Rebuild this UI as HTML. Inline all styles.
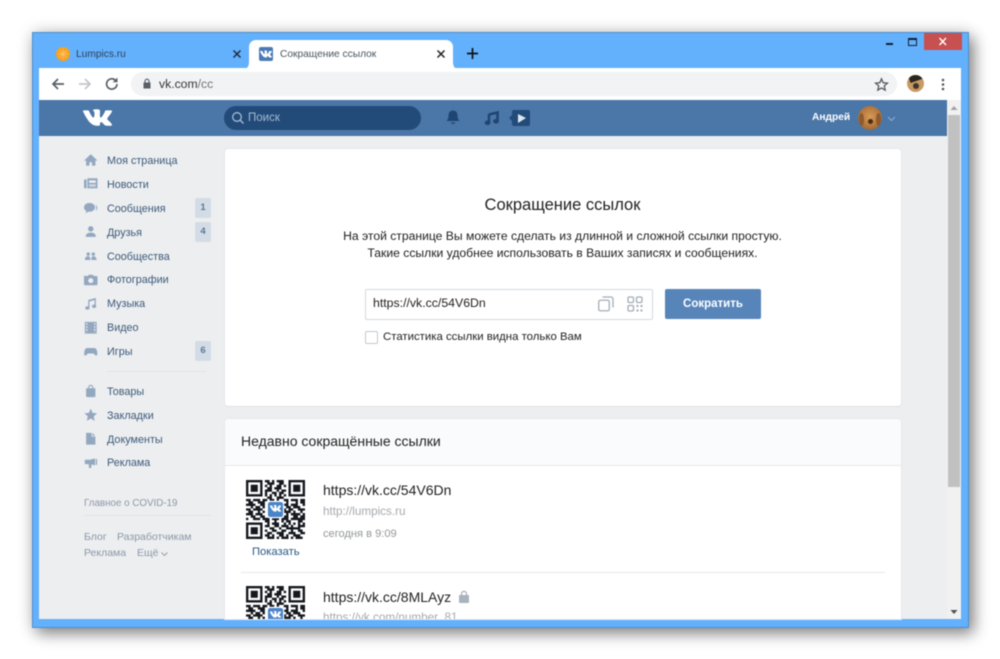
<!DOCTYPE html>
<html><head><meta charset="utf-8"><style>
html,body{margin:0;padding:0;background:#fff;width:1000px;height:659px;overflow:hidden}
body{font-family:"Liberation Sans",sans-serif;position:relative;filter:blur(.4px)}
div,span,svg{position:absolute}
.t{white-space:nowrap;line-height:16px}
.nav{left:107px;font-size:10.8px;color:#3b5a7a;white-space:nowrap;line-height:14px}
.b{left:195px;width:16px;height:20px;background:#d3dce6;border-radius:2px;color:#5b7897;font-size:9.5px;font-weight:bold;text-align:center;line-height:20px}
.ic{left:84px;width:13.500px;height:13.500px;fill:#93a8c0}
.f{font-size:10.5px;color:#8a98a8;white-space:nowrap;line-height:14px}
</style></head><body>
<svg width="0" height="0" style="position:absolute"><defs>
<path id="vk" d="M13.162 18.994c.609 0 .858-.406.851-.915-.031-1.917.714-2.949 2.059-1.604 1.488 1.488 1.796 2.519 3.603 2.519h3.2c.808 0 1.126-.26 1.126-.668 0-.863-1.421-2.386-2.625-3.504-1.686-1.565-1.765-1.602-.313-3.486 1.801-2.339 4.157-5.336 2.073-5.336h-3.981c-.772 0-.828.435-1.103 1.083-.995 2.347-2.886 5.387-3.604 4.922-.751-.485-.407-2.406-.35-5.261.015-.754.011-1.271-1.141-1.539-.629-.145-1.241-.205-1.809-.205-2.273 0-3.841.953-2.95 1.119 1.571.293 1.42 3.692 1.054 5.16-.638 2.556-3.036-2.024-4.035-4.305-.241-.548-.315-.974-1.175-.974h-3.255c-.492 0-.787.16-.787.516 0 .602 2.96 6.72 5.786 9.77 2.756 2.975 5.48 2.708 7.376 2.708z"/>
<g id="qr">
<path fill="none" stroke="#15191f" stroke-width="1" d="M8 .5h2M11 .5h1M13 .5h3M9 1.500h3M14 1.500h2M8 2.500h1M10 2.500h1M13 2.500h2M16 2.500h1M9 3.500h2M12 3.500h3M8 4.500h3M13 4.500h1M15 4.500h2M8 5.500h1M11 5.500h2M14 5.500h2M8 6.500h1M10 6.500h1M12 6.500h1M14 6.500h1M16 6.500h1M9 7.500h2M13 7.500h3M0 8.500h2M3 8.500h3M7 8.500h2M10 8.500h2M13 8.500h1M16 8.500h2M19 8.500h3M23 8.500h2M1 9.500h2M5 9.500h3M17 9.500h1M21 9.500h1M23 9.500h2M0 10.500h4M6 10.500h2M16 10.500h2M19 10.500h3M24 10.500h1M2 11.500h1M4 11.500h2M7 11.500h1M17 11.500h2M20 11.500h3M0 12.500h2M3 12.500h4M16 12.500h1M18 12.500h2M22 12.500h3M1 13.500h2M5 13.500h1M7 13.500h1M16 13.500h3M20 13.500h1M23 13.500h1M0 14.500h3M4 14.500h3M17 14.500h1M19 14.500h4M24 14.500h1M2 15.500h2M6 15.500h2M16 15.500h2M20 15.500h2M23 15.500h2M0 16.500h1M3 16.500h3M7 16.500h3M11 16.500h3M15 16.500h3M19 16.500h6M8 17.500h2M12 17.500h1M15 17.500h1M17 17.500h2M22 17.500h2M9 18.500h1M11 18.500h3M16 18.500h1M18 18.500h1M20 18.500h1M22 18.500h1M24 18.500h1M8 19.500h2M12 19.500h2M15 19.500h3M19 19.500h1M22 19.500h3M10 20.500h2M14 20.500h1M17 20.500h6M8 21.500h1M11 21.500h2M15 21.500h2M19 21.500h1M22 21.500h2M9 22.500h2M13 22.500h3M18 22.500h3M23 22.500h2M8 23.500h2M11 23.500h1M14 23.500h2M17 23.500h1M20 23.500h3M9 24.500h3M13 24.500h1M15 24.500h3M19 24.500h1M21 24.500h3"/>
<g fill="none" stroke="#15191f"><rect x=".5" y=".5" width="6" height="6"/><rect x="18.500" y=".5" width="6" height="6"/><rect x=".5" y="18.500" width="6" height="6"/></g>
<g fill="#15191f"><rect x="2" y="2" width="3" height="3"/><rect x="20" y="2" width="3" height="3"/><rect x="2" y="20" width="3" height="3"/></g>
<rect x="8.800" y="8.800" width="7.400" height="7.400" rx="1.200" fill="#fff"/><rect x="9.300" y="9.300" width="6.400" height="6.400" rx="1" fill="#4a84c8"/>
<use href="#vk" transform="translate(10.100 9.600) scale(.2)" fill="#fff"/>
</g>
</defs></svg>

<!-- window -->
<div style="left:32px;top:32px;width:935px;height:594px;background:#63b0fd;border:1px solid #4b8fd0;box-shadow:5px 6px 14px rgba(0,0,0,.42),0 0 16px rgba(0,0,0,.16)"></div>
<!-- win controls -->
<div style="left:886px;top:43px;width:7px;height:2px;background:#123"></div>
<div style="left:908px;top:38px;width:7px;height:5px;border:1px solid #123;border-top-width:2px"></div>
<div style="left:924px;top:33px;width:38px;height:17px;background:#c75050"></div>
<svg style="left:938px;top:37px" width="10" height="9"><path d="M1.500 1l6.500 7M8 1L1.500 8" stroke="#fff" stroke-width="1.400"/></svg>

<!-- tabs -->
<div style="left:56px;top:47px;width:14px;height:14px;border-radius:50%;background:#f9a11e"></div>
<svg style="left:56px;top:47px" width="14" height="14"><path d="M7 2v10M2 7h10M3.500 3.500l7 7M10.500 3.500l-7 7" stroke="#fdc66f" stroke-width=".8"/></svg>
<div class="t" style="left:76px;top:47px;font-size:10.2px;color:#2d4258">Lumpics.ru</div>
<svg style="left:232px;top:49px" width="10" height="10"><path d="M1.500 1.500l7 7M8.500 1.500l-7 7" stroke="#1f2d3d" stroke-width="1.500"/></svg>
<div style="left:249px;top:40px;width:204px;height:29px;background:#fff;border-radius:7px 7px 0 0"></div>
<svg style="left:243px;top:60px" width="216" height="9"><path d="M0 9Q6 9 6 2V9zM216 9Q210 9 210 2V9z" fill="#fff"/></svg>
<div style="left:259px;top:47px;width:14px;height:14px;background:#4a7ab5;border-radius:2px"></div>
<svg style="left:260px;top:48px" width="12" height="12" viewBox="0 0 24 24"><use href="#vk" fill="#fff"/></svg>
<div class="t" style="left:280px;top:47px;font-size:10.2px;color:#4a5560">Сокращение ссылок</div>
<svg style="left:436px;top:49px" width="10" height="10"><path d="M1.500 1.500l7 7M8.500 1.500l-7 7" stroke="#222" stroke-width="1.500"/></svg>
<svg style="left:466px;top:47px" width="13" height="13"><path d="M6.500 1v11M1 6.500h11" stroke="#111" stroke-width="1.700"/></svg>

<!-- toolbar -->
<div style="left:39px;top:68px;width:922px;height:32px;background:#fff"></div>
<svg style="left:50px;top:76px" width="16" height="16"><path d="M14 8H3M8 3L3 8l5 5" fill="none" stroke="#5a6068" stroke-width="1.700"/></svg>
<svg style="left:77px;top:76px" width="16" height="16"><path d="M2 8h11M8 3l5 5-5 5" fill="none" stroke="#c2c5c9" stroke-width="1.700"/></svg>
<svg style="left:104px;top:76px" width="16" height="16"><path d="M13 8a5.200 5.200 0 1 1-1.500-3.700" fill="none" stroke="#5a6068" stroke-width="1.700"/><path d="M13.500 1.500v4.800H8.700z" fill="#5a6068"/></svg>
<div style="left:131px;top:72px;width:766px;height:24px;background:#f1f3f4;border-radius:12px"></div>
<svg style="left:142px;top:78px" width="11" height="12"><rect x="1.500" y="4.500" width="7" height="6" fill="#5a6068"/><path d="M3 5V3.200a2 2 0 0 1 4 0V5" fill="none" stroke="#5a6068" stroke-width="1.100"/></svg>
<div class="t" style="left:159px;top:76px;font-size:12.200px;color:#33373b">vk.com<span style="position:static;color:#70757a">/cc</span></div>
<svg style="left:874px;top:77px" width="15" height="15" viewBox="0 0 24 24"><path d="M12 3l2.700 6.200 6.800.6-5.100 4.500 1.500 6.700L12 17.500 6.100 21l1.500-6.700L2.500 9.800l6.800-.6z" fill="none" stroke="#50555b" stroke-width="2"/></svg>
<div style="left:907px;top:75px;width:17px;height:17px;border-radius:50%;background:#c89a63;overflow:hidden"><div style="left:2px;top:-1px;width:13px;height:7px;background:#2c2620;transform:rotate(-20deg)"></div><div style="left:6px;top:8px;width:6px;height:6px;background:#41352c;border-radius:50%"></div></div>
<svg style="left:941px;top:78px" width="4" height="13"><circle cx="2" cy="2" r="1.300" fill="#555"/><circle cx="2" cy="6.500" r="1.300" fill="#555"/><circle cx="2" cy="11" r="1.300" fill="#555"/></svg>

<!-- page bg -->
<div style="left:39px;top:100px;width:908px;height:519px;background:#edeef0"></div>
<!-- scrollbar -->
<div style="left:947px;top:100px;width:14px;height:519px;background:#f1f1f1"></div>
<div style="left:948px;top:115px;width:12px;height:372px;background:#c1c1c1"></div>
<svg style="left:950px;top:105px" width="8" height="6"><path d="M4 1l3.500 4H.5z" fill="#a3a3a3"/></svg>
<svg style="left:950px;top:609px" width="8" height="6"><path d="M4 5L7.500 1H.5z" fill="#505050"/></svg>

<!-- VK header -->
<div style="left:39px;top:100px;width:908px;height:36px;background:#4a76a8"></div>
<svg style="left:83px;top:109px" width="29" height="17" viewBox="0 4.800 24 14.400" preserveAspectRatio="none"><use href="#vk" fill="#fff"/></svg>
<div style="left:224px;top:106px;width:197px;height:24px;background:#224b7a;border-radius:12px"></div>
<svg style="left:231px;top:111px" width="14" height="14"><circle cx="6" cy="6" r="4.300" fill="none" stroke="#a5bad2" stroke-width="1.300"/><path d="M9 9l3.500 3.500" stroke="#a5bad2" stroke-width="1.300"/></svg>
<div class="t" style="left:248px;top:110px;font-size:11.500px;color:#a5bad2">Поиск</div>
<svg style="left:445px;top:109px" width="16" height="17"><path d="M8 1.500c-3 0-4.500 2.300-4.500 5 0 3-1 4.300-2 5.500h13c-1-1.200-2-2.500-2-5.500 0-2.700-1.500-5-4.500-5z" fill="#1f4673"/><path d="M5.500 13.500h5q-1 1.500-2.500 1.500t-2.500-1.500z" fill="#1f4673"/></svg>
<svg style="left:484px;top:110px" width="15" height="16"><path d="M5 4.500L13.500 2.500v8.500" fill="none" stroke="#1f4673" stroke-width="2.600"/><path d="M5 4v8.500" stroke="#1f4673" stroke-width="2.400"/><ellipse cx="3.600" cy="12.800" rx="2.900" ry="2.300" fill="#1f4673"/><ellipse cx="12" cy="11.300" rx="2.900" ry="2.300" fill="#1f4673"/></svg>
<svg style="left:509px;top:110px" width="21" height="16"><path d="M5 0h14a2 2 0 0 1 2 2v12a2 2 0 0 1-2 2H5a2 2 0 0 1-2-2v-3L0 8l3-3V2a2 2 0 0 1 2-2z" fill="#224b7a"/><path d="M9 4l8 4-8 5z" fill="#dce6f0"/></svg>
<div class="t" style="left:812px;top:110px;font-size:10.200px;font-weight:bold;color:#fff">Андрей</div>
<div style="left:858px;top:106px;width:24px;height:24px;border-radius:50%;background:radial-gradient(circle at 50% 45%,#d69a58 0,#b5763b 55%,#6b5a3e 100%);overflow:hidden"><div style="left:10px;top:13px;width:5px;height:5px;background:#4c2d16;border-radius:50%"></div><div style="left:1px;top:7px;width:5px;height:13px;background:#8f5a2c;border-radius:50%"></div><div style="left:18px;top:7px;width:5px;height:13px;background:#8f5a2c;border-radius:50%"></div></div>
<svg style="left:887px;top:116px" width="9" height="6"><path d="M1 1l3.500 3.500L8 1" fill="none" stroke="#8fadd0" stroke-width="1.100"/></svg>

<!-- sidebar -->
<svg class="ic" style="top:153px" viewBox="0 0 16 16"><path d="M8 1.500L0 9h2.500v6h4v-4h3v4h4V9H16z"/></svg>
<svg class="ic" style="top:177px" viewBox="0 0 16 16"><path fill-rule="evenodd" d="M0 3h3v10.500H1.500A1.500 1.500 0 0 1 0 12zM4 1.500h12v12H4zM6 4v3h8V4zM6 9v1.500h8V9zM6 11.500V12h8v-.5z"/></svg>
<svg class="ic" style="top:201px" viewBox="0 0 16 16"><ellipse cx="6.500" cy="7.500" rx="6.500" ry="5.300"/><path d="M3 11l-1 3.500 4-2.500zM14 4.500c2.500 2.500 2 5.500 0 7.500 .5-2.500 .5-5 0-7.500z"/></svg>
<svg class="ic" style="top:225px" viewBox="0 0 16 16"><circle cx="8" cy="4.500" r="3.200"/><path d="M2 14c0-3 2-5 6-5s6 2 6 5z"/></svg>
<svg class="ic" style="top:249px" viewBox="0 0 16 16"><circle cx="5" cy="6" r="2"/><circle cx="11" cy="6" r="2"/><path d="M1 13c0-2.500 1.500-4.500 3.800-4.500S7.500 10.500 7.500 13zM8.500 13c0-2.500 1-4.500 2.700-4.500S15 10.500 15 13z"/></svg>
<svg class="ic" style="top:273px" viewBox="0 0 16 16"><path fill-rule="evenodd" d="M1.500 3.500h3l1-1.500h5l1 1.500h3A1.500 1.500 0 0 1 16 5v8a1.500 1.500 0 0 1-1.500 1.500h-13A1.500 1.500 0 0 1 0 13V5a1.500 1.500 0 0 1 1.500-2zM8 6a3 3 0 1 0 0 6 3 3 0 0 0 0-6z"/></svg>
<svg class="ic" style="top:297px" viewBox="0 0 16 16"><path d="M5 3.500L14 1v2.300L6.500 5.300V13H5zM12.500 3.300H14V11h-1.500z"/><ellipse cx="4" cy="13" rx="2.500" ry="2"/><ellipse cx="12" cy="11" rx="2.500" ry="2"/></svg>
<svg class="ic" style="top:321px" viewBox="0 0 16 16"><path fill-rule="evenodd" d="M1 1h14v14H1zM2.500 2.500v2h1.500v-2zM2.500 6v2h1.500V6zM2.500 9.500v2h1.500v-2zM2.500 13v.5h1.500V13zM12 2.500v2h1.500v-2zM12 6v2h1.500V6zM12 9.500v2h1.500v-2zM12 13v.5h1.500V13z"/></svg>
<svg class="ic" style="top:345px" viewBox="0 0 16 16"><path d="M4 3.500h8c2 0 3 1.500 3.500 4 .5 3 .5 5-1 5-1.500 0-2.500-2.500-3.500-2.500H5C4 10 3 12.500 1.500 12.500c-1.500 0-1.500-2-1-5C1 5 2 3.500 4 3.500z"/></svg>
<svg class="ic" style="top:384px" viewBox="0 0 16 16"><path d="M5 5V3.800C5 2 6.300 1 8 1s3 1 3 2.800V5h2.500v9a1.500 1.500 0 0 1-1.500 1.500H4A1.500 1.500 0 0 1 2.500 14V5zM6.300 5h3.400V3.800C9.700 2.800 9 2.200 8 2.200s-1.700.6-1.700 1.600z"/></svg>
<svg class="ic" style="top:408px" viewBox="0 0 16 16"><path d="M8 .8l2.200 5 5.300.5-4 3.600 1.200 5.300L8 12.400l-4.700 2.800 1.200-5.300-4-3.600 5.300-.5z"/></svg>
<svg class="ic" style="top:432px" viewBox="0 0 16 16"><path d="M2.500 1H9v4.500h4.500V15h-11zM10 1.200l3.300 3.300H10z"/></svg>
<svg class="ic" style="top:456px" viewBox="0 0 16 16"><path d="M1 4.500h6L13 2.800v8.400L9 9.800l-.5 4.400H6L5.500 9.700H1zM14 3.500h1.500v7H14z"/></svg>

<div class="nav" style="top:154px">Моя страница</div>
<div class="nav" style="top:178px">Новости</div>
<div class="nav" style="top:202px">Сообщения</div>
<div class="nav" style="top:226px">Друзья</div>
<div class="nav" style="top:250px">Сообщества</div>
<div class="nav" style="top:273px">Фотографии</div>
<div class="nav" style="top:297px">Музыка</div>
<div class="nav" style="top:321px">Видео</div>
<div class="nav" style="top:345px">Игры</div>
<div class="nav" style="top:385px">Товары</div>
<div class="nav" style="top:409px">Закладки</div>
<div class="nav" style="top:433px">Документы</div>
<div class="nav" style="top:456px">Реклама</div>
<div class="b" style="top:198px">1</div>
<div class="b" style="top:222px">4</div>
<div class="b" style="top:341px">6</div>
<div style="left:107px;top:371px;width:99px;height:1px;background:#e0e3e7"></div>
<div class="f" style="left:84px;top:496px;font-size:9.800px;line-height:15px">Главное о COVID-19</div>
<div style="left:84px;top:515px;width:127px;height:1px;background:#e0e3e7"></div>
<div class="f" style="left:84px;top:530px">Блог</div>
<div class="f" style="left:117px;top:530px">Разработчикам</div>
<div class="f" style="left:84px;top:546px">Реклама</div>
<div class="f" style="left:137px;top:546px">Ещё</div>
<svg style="left:161px;top:552px" width="7" height="5"><path d="M.5.5l3 3 3-3" fill="none" stroke="#93a2b2"/></svg>

<!-- card 1 -->
<div style="left:225px;top:149px;width:676px;height:257px;background:#fff;border-radius:3px;box-shadow:0 1px 0 #dce1e6,0 0 0 1px #e7e8ec"></div>
<div class="t" style="left:225px;width:675px;top:196px;text-align:center;font-size:16.500px;line-height:18px;color:#222">Сокращение ссылок</div>
<div class="t" style="left:225px;width:675px;top:228px;text-align:center;font-size:12.150px;color:#222">На этой странице Вы можете сделать из длинной и сложной ссылки простую.</div>
<div class="t" style="left:225px;width:675px;top:245px;text-align:center;font-size:12.150px;color:#222">Такие ссылки удобнее использовать в Ваших записях и сообщениях.</div>
<div style="left:365px;top:289px;width:286px;height:29px;background:#fff;border:1px solid #d3d9de;border-radius:2px"></div>
<div class="t" style="left:373px;top:295px;font-size:12.300px;color:#222">https://vk.cc/54V6Dn</div>
<svg style="left:598px;top:296px" width="16" height="16"><rect x=".75" y="4.250" width="10.500" height="10.500" rx="1.500" fill="none" stroke="#a3adb8" stroke-width="1.300"/><path d="M4.500 1h8.500a2 2 0 0 1 2 2v8.500" fill="none" stroke="#a3adb8" stroke-width="1.300"/></svg>
<svg style="left:627px;top:296px" width="16" height="16" fill="none" stroke="#a3adb8" stroke-width="1.300"><rect x="1" y="1" width="5.500" height="5.500" rx="1.200"/><rect x="9.500" y="1" width="5.500" height="5.500" rx="1.200"/><rect x="1" y="9.500" width="5.500" height="5.500" rx="1.200"/><path d="M9.500 10h2M13.500 10h2M9.500 14.500h2M13.500 14.500h2" stroke-width="2"/></svg>
<div style="left:665px;top:289px;width:96px;height:30px;background:#5181b8;border-radius:2px;color:#fff;font-size:11.500px;font-weight:bold;text-align:center;line-height:30px;opacity:.96">Сократить</div>
<div style="left:365px;top:331px;width:11px;height:11px;border:1px solid #c1c9d1;border-radius:2px;background:#fff"></div>
<div class="t" style="left:383px;top:329px;font-size:11.400px;color:#222">Статистика ссылки видна только Вам</div>

<!-- card 2 -->
<div style="left:225px;top:419px;width:676px;height:200px;background:#fff;border-radius:3px 3px 0 0;box-shadow:0 0 0 1px #e7e8ec"></div>
<div style="left:225px;top:419px;width:676px;height:46px;background:#fafbfc;border-bottom:1px solid #e7e8ec;border-radius:3px 3px 0 0"></div>
<div class="t" style="left:241px;top:433px;font-size:14px;color:#222">Недавно сокращённые ссылки</div>
<svg style="left:246px;top:480px" width="59" height="59" viewBox="0 0 25 25"><use href="#qr"/></svg>
<div class="t" style="left:252px;top:544px;font-size:11.200px;color:#2a5885">Показать</div>
<div class="t" style="left:323px;top:482px;font-size:14px;color:#222">https://vk.cc/54V6Dn</div>
<div class="t" style="left:323px;top:504px;font-size:11.700px;color:#a5a9ad">http://lumpics.ru</div>
<div class="t" style="left:323px;top:526px;font-size:11.100px;color:#939699">сегодня в 9:09</div>
<div style="left:241px;top:572px;width:644px;height:1px;background:#e7e8ec"></div>
<div style="left:225px;top:575px;width:676px;height:44px;overflow:hidden">
<svg style="left:21px;top:11px" width="59" height="59" viewBox="0 0 25 25"><use href="#qr"/></svg>
<div class="t" style="left:98px;top:14px;font-size:14px;color:#222">https://vk.cc/8MLAyz</div>
<svg style="left:233px;top:15px" width="12" height="13"><rect x="1" y="5" width="10" height="8" rx="1" fill="#a9b2bd"/><path d="M3.500 5.500V3.800a2.500 2.500 0 0 1 5 0v1.700" fill="none" stroke="#a9b2bd" stroke-width="1.300"/></svg>
<div class="t" style="left:98px;top:35px;font-size:11.700px;color:#a5a9ad">https://vk.com/number_81</div>
</div>
</body></html>
